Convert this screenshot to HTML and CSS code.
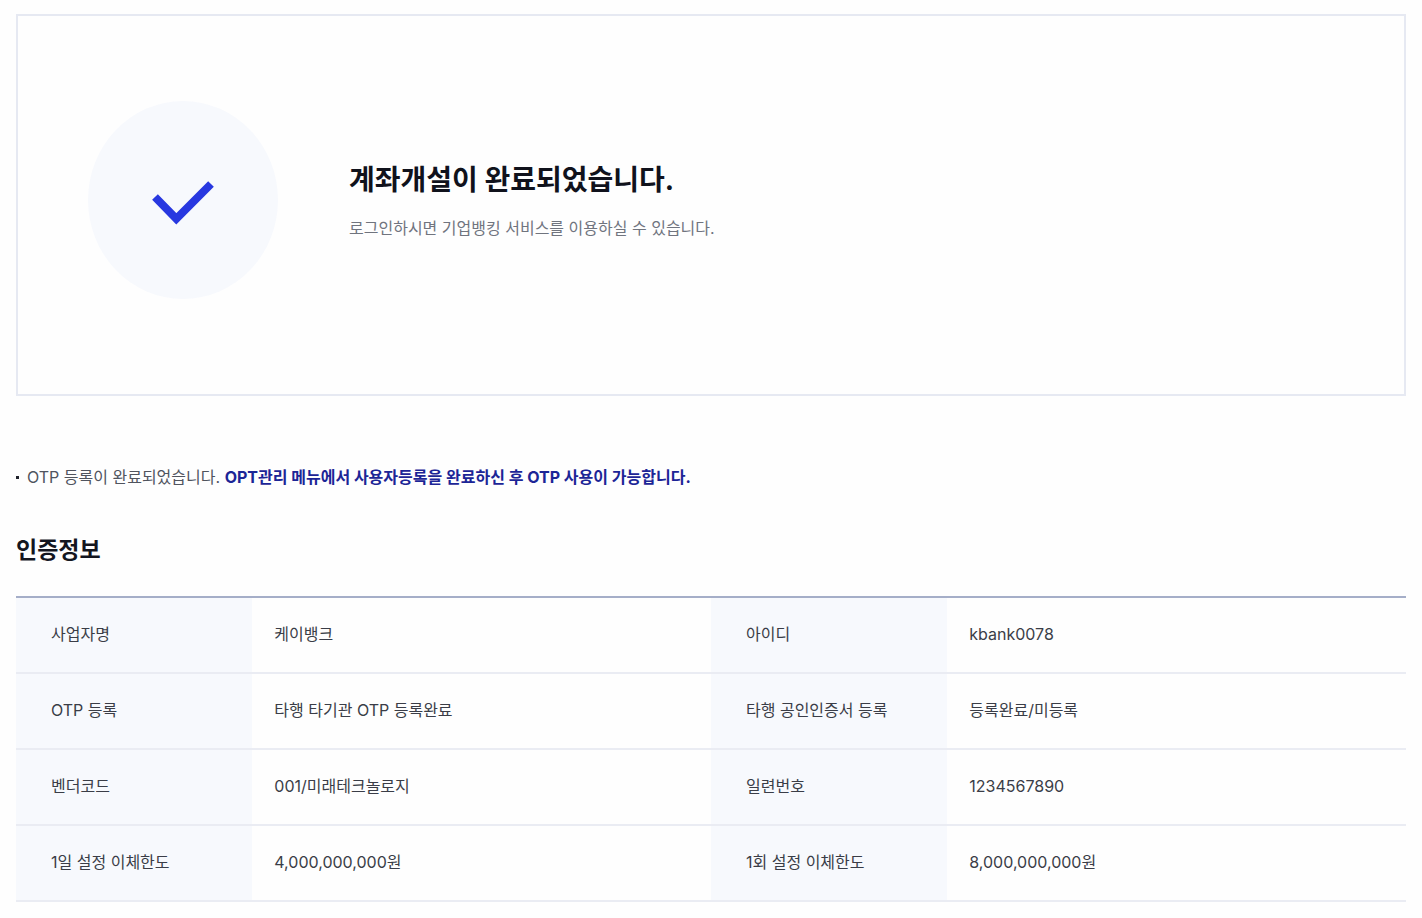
FILE: index.html
```html
<!DOCTYPE html>
<html lang="ko">
<head>
<meta charset="utf-8">
<title>계좌개설 완료</title>
<link rel="stylesheet" href="styles.css">
</head>
<body>
<main class="page">
  <section class="result">
    <div class="result-icon">
      <svg class="check" viewBox="0 0 62 46" aria-hidden="true"><path d="M3 17 24.3 38.8 59 4" fill="none" stroke="#2838e0" stroke-width="8"/></svg>
    </div>
    <div class="result-text">
      <h1 class="result-title">계좌개설이 완료되었습니다.</h1>
      <p class="result-desc">로그인하시면 기업뱅킹 서비스를 이용하실 수 있습니다.</p>
    </div>
  </section>
  <ul class="notice">
    <li class="notice-item"><p class="notice-text">OTP 등록이 완료되었습니다. <strong class="notice-strong">OPT관리 메뉴에서 사용자등록을 완료하신 후 OTP 사용이 가능합니다.</strong></p></li>
  </ul>
  <h2 class="section-title" id="auth-title">인증정보</h2>
  <table class="info" aria-labelledby="auth-title">
    <colgroup><col class="col-label"><col class="col-value"><col class="col-label"><col class="col-value"></colgroup>
    <tbody>
      <tr><th scope="row">사업자명</th><td>케이뱅크</td><th scope="row">아이디</th><td>kbank0078</td></tr>
      <tr><th scope="row">OTP 등록</th><td>타행 타기관 OTP 등록완료</td><th scope="row">타행 공인인증서 등록</th><td>등록완료/미등록</td></tr>
      <tr><th scope="row">벤더코드</th><td>001/미래테크놀로지</td><th scope="row">일련번호</th><td>1234567890</td></tr>
      <tr><th scope="row">1일 설정 이체한도</th><td>4,000,000,000원</td><th scope="row">1회 설정 이체한도</th><td>8,000,000,000원</td></tr>
    </tbody>
  </table>
</main>
</body>
</html>
```
FILE: styles.css
```css
* {
  box-sizing: border-box;
}

body {
  margin: 0;
  background: #fefefe;
  color: #3a3d47;
  font-family: Inter, "Noto Sans CJK KR", sans-serif;
  font-size: 16px;
  line-height: 24px;
}

h1,
h2,
p,
ul {
  margin: 0;
  padding: 0;
}

.page {
  padding: 14px 16px 0;
}

.result {
  display: flex;
  align-items: center;
  gap: 71px;
  padding: 85px 70px 95px;
  border: 2px solid #e6e9f2;
}

.result-icon {
  display: flex;
  flex: none;
  align-items: center;
  justify-content: center;
  width: 190px;
  height: 198px;
  padding-top: 6px;
  border-radius: 50%;
  background: #f7f9fd;
}

.check {
  width: 62px;
  height: 46px;
}

.result-text {
  display: grid;
  gap: 16px;
}

.result-title {
  color: #10121c;
  font-size: 28px;
  font-weight: 700;
  line-height: 40px;
}

.result-desc {
  color: #70747e;
}

.notice {
  margin-top: 69px;
  list-style: none;
}

.notice-item {
  display: flex;
  align-items: center;
  gap: 8px;
}

.notice-item::before {
  content: "";
  width: 3px;
  height: 3px;
  background: #20222c;
}

.notice-text {
  color: #50545e;
}

.notice-strong {
  color: #1c2596;
  font-weight: 700;
}

.section-title {
  margin-top: 45px;
  color: #14161f;
  font-size: 23px;
  font-weight: 700;
  line-height: 32px;
}

.info {
  width: 100%;
  margin-top: 30px;
  border-collapse: separate;
  border-spacing: 0;
  border-top: 2px solid #a5aec8;
  table-layout: fixed;
}

.col-label {
  width: 17%;
}

.col-value {
  width: 33%;
}

.info th,
.info td {
  height: 76px;
  padding: 0 22px 2px;
  border-bottom: 2px solid #eaecf3;
  font-weight: 400;
  text-align: left;
}

.info th {
  padding: 0 0 2px 35px;
  background: #f7f9fd;
}
```
